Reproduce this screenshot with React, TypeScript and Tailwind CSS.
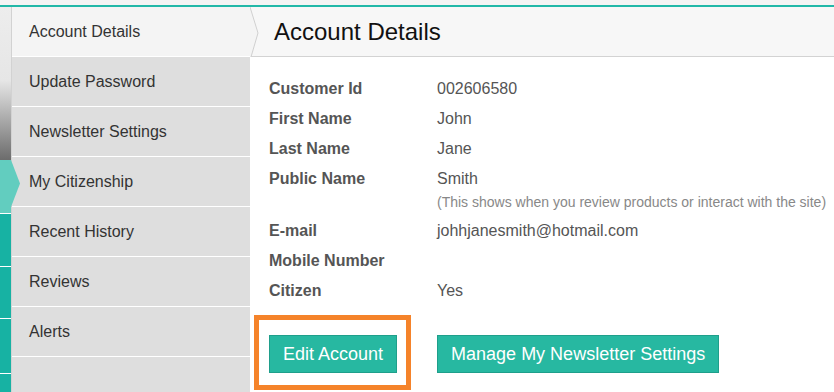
const MENU = [
  "Account Details",
  "Update Password",
  "Newsletter Settings",
  "My Citizenship",
  "Recent History",
  "Reviews",
  "Alerts",
];

const DETAILS: { label: string; value: string; note?: string }[] = [
  { label: "Customer Id", value: "002606580" },
  { label: "First Name", value: "John" },
  { label: "Last Name", value: "Jane" },
  {
    label: "Public Name",
    value: "Smith",
    note: "(This shows when you review products or interact with the site)",
  },
  { label: "E-mail", value: "johhjanesmith@hotmail.com" },
  { label: "Mobile Number", value: "" },
  { label: "Citizen", value: "Yes" },
];

function LeftStrip() {
  return (
    <div className="flex w-[11px] shrink-0 flex-col">
      <div className="h-[153px] bg-[linear-gradient(to_bottom,#ededed_0%,#e6e6e6_48%,#6c6c6c_100%)]" />
      <div className="h-[53px] bg-[#62cdbf]" />
      <div className="h-px bg-white" />
      <div className="h-[52px] bg-[#17b2a3]" />
      <div className="h-px bg-white" />
      <div className="h-[51px] bg-[#17b2a3]" />
      <div className="h-px bg-white" />
      <div className="h-[54px] bg-[#17b2a3]" />
      <div className="h-px bg-white" />
      <div className="flex-1 bg-[#17b2a3]" />
    </div>
  );
}

function Sidebar() {
  return (
    <nav className="flex w-[239px] shrink-0 flex-col border-l border-[#d2d2d2] bg-[#dedede]">
      {MENU.map((item, i) => (
        <div
          key={item}
          className={
            "relative flex h-[50px] items-center border-b border-white pl-[17px] pt-px text-[16px] text-[#333] " +
            (i === 0 ? "bg-[#f4f4f4]" : "")
          }
        >
          {item === "My Citizenship" && (
            <svg className="absolute -left-px top-[3px]" width="10" height="47" viewBox="0 0 10 47">
              <polygon points="0,0 9,23.5 0,47" fill="#62cdbf" />
            </svg>
          )}
          {item}
        </div>
      ))}
      <div className="flex-1" />
    </nav>
  );
}

export default function App() {
  return (
    <div className="flex h-[392px] w-[834px] flex-col overflow-hidden bg-white [font-family:'Liberation_Sans',Arial,sans-serif]">
      <div className="h-[5px] bg-[#f4f4f4]" />
      <div className="h-[2px] bg-[#22b8a8]" />

      <div className="flex flex-1">
        <LeftStrip />
        <Sidebar />

        <main className="relative flex flex-1 flex-col">
          {/* header with chevron */}
          <div className="relative flex h-[50px] items-center border-b border-[#d3d3d3] bg-[#f7f7f7] pl-[24px] text-[24px] text-[#111]">
            <svg className="absolute left-0 top-0" width="10" height="51" viewBox="0 0 10 51">
              <polygon points="0,0 8,26 1,50 0,50" fill="#f4f4f4" />
              <polyline points="0,0 8,26 1,50" fill="none" stroke="#d0d0d0" strokeWidth="1" />
            </svg>
            Account Details
          </div>

          <div className="flex flex-col pl-[19px] pt-[17px] text-[16px] text-[#555]">
            {DETAILS.map((d) => (
              <div key={d.label} className="flex">
                <div className="w-[168px] shrink-0 font-bold leading-[30px]">{d.label}</div>
                <div className="flex flex-col">
                  <span className="h-[30px] leading-[30px]">{d.value}</span>
                  {d.note && (
                    <span className="pb-[6px] text-[14px] leading-[16px] text-[#888]">{d.note}</span>
                  )}
                </div>
              </div>
            ))}

            <div className="mt-[29px] flex gap-[40px]">
              <button className="relative h-[38px] border border-[#1f9f8b] bg-[#27b8a1] px-[13px] text-[18px] text-white">
                <span className="pointer-events-none absolute -left-[16px] -right-[15px] -top-[21px] -bottom-[18px] border-[5px] border-[#f5832a]" />
                Edit Account
              </button>
              <button className="h-[38px] border border-[#1f9f8b] bg-[#27b8a1] px-[13px] text-[18px] text-white">
                Manage My Newsletter Settings
              </button>
            </div>
          </div>
        </main>
      </div>
    </div>
  );
}
